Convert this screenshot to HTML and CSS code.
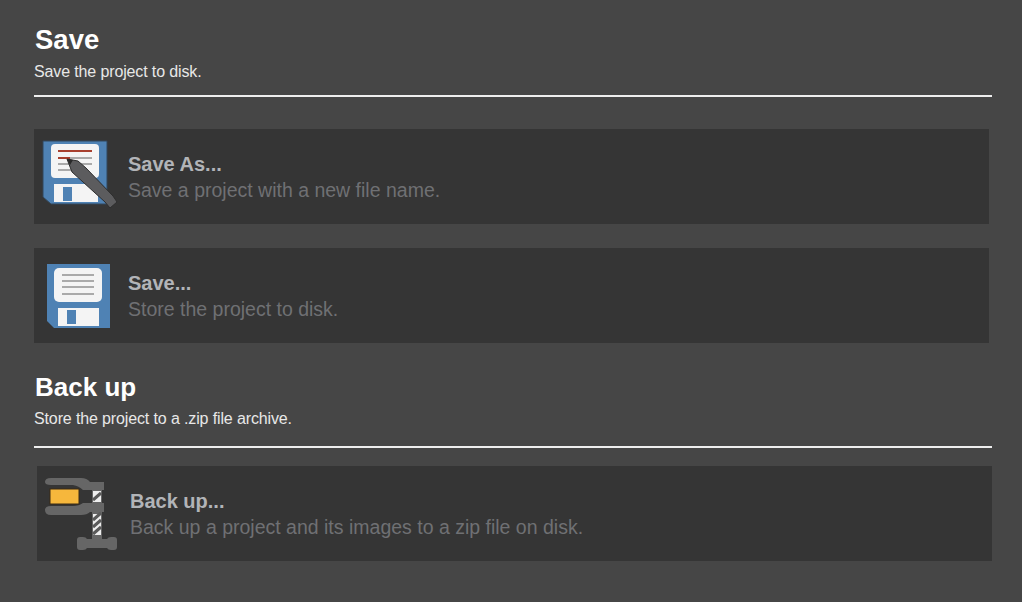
FILE: index.html
```html
<!DOCTYPE html>
<html lang="en">
<head>
    <meta charset="UTF-8">
    <meta name="viewport" content="width=device-width, initial-scale=1.0">
    <title>Save</title>
    <link rel="stylesheet" href="styles.css">
</head>
<body>
    <section class="group">
        <h1>Save</h1>
        <p class="group-desc">Save the project to disk.</p>
        <hr class="rule">
        <div class="action">
            <svg class="icon" width="80" height="71" viewBox="0 0 80 71">
                <path d="M3 0H67V63H11L3 56Z" fill="#4f82b4" stroke="#33475a" stroke-width="1"/>
                <rect x="11" y="3" width="48" height="34" rx="4" fill="#f4f4f4"/>
                <rect x="14" y="43" width="44" height="18" fill="#f4f4f4"/>
                <rect x="23" y="46" width="9" height="14" fill="#4f82b4"/>
                <rect x="18" y="9" width="34" height="2" fill="#a8402f"/>
                <rect x="18" y="16" width="12" height="2" fill="#a8402f"/>
                <rect x="30" y="16" width="22" height="2" fill="#aaa"/>
                <rect x="18" y="22" width="34" height="2" fill="#aaa"/>
                <rect x="18" y="28" width="18" height="2" fill="#aaa"/>
                <path d="M27 18L38 20 46 27 73 55 77 61 70 67 65 61 32 31Z" fill="#5c5c5e" stroke="#2e2e2e" stroke-width="1"/>
                <path d="M27 18L33 19 30 24Z" fill="#2a2a2a"/>
            </svg>
            <div class="action-text">
                <div class="action-title">Save As...</div>
                <div class="action-desc">Save a project with a new file name.</div>
            </div>
        </div>
        <div class="action">
            <svg class="icon" width="80" height="71" viewBox="0 0 80 71">
                <path d="M7 4H70V68H14L7 61Z" fill="#4f82b4"/>
                <rect x="14" y="8" width="48" height="34" rx="5" fill="#f4f4f4"/>
                <rect x="18" y="48" width="41" height="18" fill="#f4f4f4"/>
                <rect x="27" y="50" width="9" height="14" fill="#4f82b4"/>
                <rect x="22" y="14" width="32" height="2" fill="#aaa"/>
                <rect x="22" y="20" width="32" height="2" fill="#aaa"/>
                <rect x="22" y="26" width="32" height="2" fill="#aaa"/>
                <rect x="22" y="33" width="32" height="2" fill="#aaa"/>
            </svg>
            <div class="action-text">
                <div class="action-title">Save...</div>
                <div class="action-desc">Store the project to disk.</div>
            </div>
        </div>
    </section>
    <section class="group backup">
        <h1>Back up</h1>
        <p class="group-desc">Store the project to a .zip file archive.</p>
        <hr class="rule">
        <div class="action shifted">
            <svg class="icon" width="80" height="71" viewBox="0 0 80 71">
                <rect x="49" y="10" width="10" height="52" fill="#666"/>
                <path d="M2 4Q2 0 8 0H38Q44 0 47 4H61V12H40Q36 8 30 7H8Q2 7 2 4Z" fill="#666"/>
                <path d="M2 32Q2 28 8 28H30Q36 28 40 25H61V34H47Q44 37 38 37H8Q2 37 2 32Z" fill="#666"/>
                <rect x="50" y="13" width="8" height="11" fill="#eee"/>
                <rect x="50" y="36" width="8" height="21" fill="#eee"/>
                <path d="M50 22L58 15M50 42L58 35M50 49L58 42M50 56L58 49" stroke="#5a5a5a" stroke-width="3"/>
                <path d="M34 62Q34 59 37 59H40Q43 59 44 61H64Q65 59 68 59H71Q74 59 74 62V69Q74 72 71 72H68Q65 72 64 70H44Q43 72 40 72H37Q34 72 34 69Z" fill="#666"/>
                <rect x="7" y="11" width="29" height="15" fill="#f6b73c" stroke="#3a2a14" stroke-width="1"/>
            </svg>
            <div class="action-text">
                <div class="action-title">Back up...</div>
                <div class="action-desc">Back up a project and its images to a zip file on disk.</div>
            </div>
        </div>
    </section>
</body>
</html>
```

FILE: styles.css
```css
body {
    font-family: "Liberation Sans", Arial, sans-serif;
    margin: 0;
    padding: 23px 30px 0 34px;
    background-color: #464646;
    color: white;
}

h1 {
    font-size: 27.5px;
    line-height: 34px;
    font-weight: bold;
    margin: 0;
    padding-left: 1px;
}

.group-desc {
    font-size: 16px;
    line-height: 18px;
    letter-spacing: -0.13px;
    margin: 6px 0 0;
    color: #e8e8e8;
}

.rule {
    border: none;
    height: 2px;
    background: #eee;
    margin: 14px 0 32px;
}

.action {
    display: flex;
    align-items: center;
    height: 95px;
    width: 955px;
    margin-bottom: 24px;
    padding-left: 6px;
    box-sizing: border-box;
    background-color: #353535;
}

.icon {
    flex: none;
    margin-right: 8px;
    overflow: visible;
}

.action-text {
    padding-top: 2px;
}

.action-title {
    font-size: 20px;
    line-height: 25px;
    font-weight: bold;
    color: #b2b4b8;
}

.action-desc {
    font-size: 19.5px;
    line-height: 26px;
    color: #6f7073;
}

.backup {
    margin-top: 27px;
}

.backup h1 {
    font-size: 26px;
}

.backup .rule {
    margin: 18px 0 18px;
}

.shifted {
    margin-left: 3px;
}

.shifted .icon {
    margin-right: 7px;
}
```
